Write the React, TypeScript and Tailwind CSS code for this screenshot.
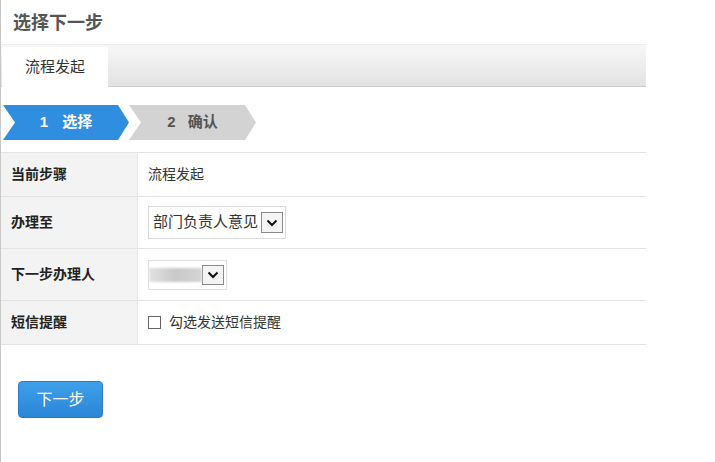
import { useState } from "react";

const font = { fontFamily: '"Liberation Sans", "Noto Sans CJK SC", sans-serif' };

function Steps() {
  return (
    <div className="flex items-center h-[35px] mt-[18px] ml-[2px]">
      <div
        className="w-[126px] h-[35px] bg-[#2f8ee0] flex items-center justify-center text-white text-[15px] font-bold"
        style={{ clipPath: "polygon(0 0, 115px 0, 126px 50%, 115px 100%, 0 100%, 12px 50%)" }}
      >
        <span>1</span>
        <span className="ml-[14px]">选择</span>
      </div>
      <div
        className="w-[127px] h-[35px] bg-[#d3d3d3] flex items-center justify-center text-[#555] text-[15px] font-bold"
        style={{ clipPath: "polygon(0 0, 116px 0, 127px 50%, 116px 100%, 0 100%, 12px 50%)" }}
      >
        <span>2</span>
        <span className="ml-[12px]">确认</span>
      </div>
    </div>
  );
}

function Arrow() {
  return (
    <svg width="12" height="8" viewBox="0 0 12 8">
      <path d="M1.5 1.5 L6 6 L10.5 1.5" stroke="#111" strokeWidth="2" fill="none" />
    </svg>
  );
}

export default function App() {
  const [sms, setSms] = useState(false);

  const rows = [
    { label: "当前步骤", h: "h-[44px]", value: <span className="text-[14px] text-[#333]">流程发起</span> },
    {
      label: "办理至",
      h: "h-[52px]",
      value: (
        <div className="flex items-center border border-[#d9d9d9] bg-white pl-[4px] pr-[2px] h-[33px]">
          <span className="whitespace-nowrap text-[15px] text-[#333]">部门负责人意见</span>
          <div className="ml-[3px] w-[22px] h-[21px] border border-[#8a8a8a] bg-[#f4f4f4] flex items-center justify-center">
            <Arrow />
          </div>
        </div>
      ),
    },
    {
      label: "下一步办理人",
      h: "h-[52px]",
      value: (
        <div className="flex items-center border border-[#e0e0e0] bg-white w-[79px] h-[30px] pr-[2px]">
          <div className="flex-1 h-[14px] bg-gradient-to-r from-[#e2e2e2] via-[#c9c9c9] to-[#d5d5d5] blur-[1px]" />
          <div className="w-[22px] h-[20px] border border-[#8a8a8a] bg-[#f4f4f4] flex items-center justify-center">
            <Arrow />
          </div>
        </div>
      ),
    },
    {
      label: "短信提醒",
      h: "h-[44px]",
      value: (
        <label className="flex items-center gap-[8px] text-[14px] text-[#333] cursor-pointer">
          <span
            onClick={() => setSms(!sms)}
            className="w-[13px] h-[13px] border border-[#666] bg-white flex items-center justify-center text-[10px] leading-none"
          >
            {sms ? "✓" : ""}
          </span>
          勾选发送短信提醒
        </label>
      ),
    },
  ];

  return (
    <div className="w-[715px] h-[462px] bg-white border-l border-[#c8c8c8] overflow-hidden" style={font}>
      <div className="w-[645px]">
        <div className="h-[44px] flex items-center pl-[12px] pt-[2px] text-[18px] font-bold text-[#555]">选择下一步</div>

        <div className="h-[43px] flex items-end bg-gradient-to-b from-[#f7f7f7] to-[#e3e3e3] border-t border-[#ececec] border-b border-b-[#cfcfcf]">
          <div className="ml-[1px] w-[106px] h-[40px] -mb-[1px] bg-white flex items-center justify-center text-[15px] text-[#333]">
            流程发起
          </div>
        </div>

        <Steps />

        <div className="mt-[12px] border-t border-[#e3e3e3]">
          {rows.map(r => (
            <div key={r.label} className={`flex ${r.h} border-b border-[#e3e3e3]`}>
              <div className="w-[137px] bg-[#f3f3f3] border-r border-[#e6e6e6] flex items-center pl-[10px] text-[14px] font-bold text-[#222]">
                {r.label}
              </div>
              <div className="flex-1 flex items-center pl-[10px]">{r.value}</div>
            </div>
          ))}
        </div>

        <button className="mt-[36px] ml-[17px] w-[85px] h-[37px] rounded-[4px] bg-gradient-to-b from-[#3fa0ea] to-[#2a86d8] border border-[#2a7cc8] text-white text-[16px]">
          下一步
        </button>
      </div>
    </div>
  );
}
